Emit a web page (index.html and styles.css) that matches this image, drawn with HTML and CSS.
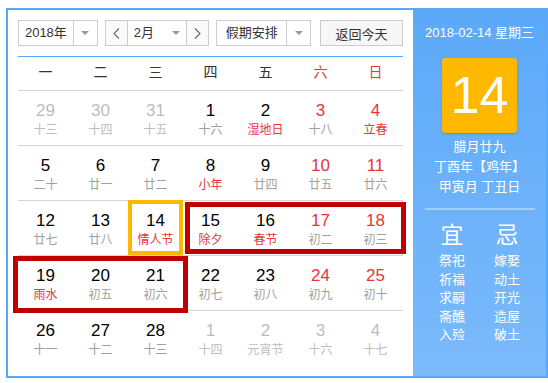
FILE: index.html
```html
<!DOCTYPE html>
<html lang="zh-CN">

<head>
    <meta charset="UTF-8">
    <meta name="viewport" content="width=device-width, initial-scale=1.0">
    <title>万年历</title>
    <link rel="stylesheet" href="styles.css">
</head>

<body>
    <div class="calendar">
        <div class="main">
            <!-- 工具栏 -->
            <div class="toolbar">
                <div class="select year">
                    <span class="label">2018年</span>
                    <span class="arrow"><i class="caret"></i></span>
                </div>
                <div class="select month">
                    <span class="nav"><svg width="7" height="11" viewBox="0 0 7 11"><polyline points="6,0.5 1,5.5 6,10.5" fill="none" stroke="#666" stroke-width="1.1"/></svg></span>
                    <span class="label"><span>2月</span><i class="caret"></i></span>
                    <span class="nav"><svg width="7" height="11" viewBox="0 0 7 11"><polyline points="1,0.5 6,5.5 1,10.5" fill="none" stroke="#666" stroke-width="1.1"/></svg></span>
                </div>
                <div class="select holiday">
                    <span class="label">假期安排</span>
                    <span class="arrow"><i class="caret"></i></span>
                </div>
                <button class="today-btn">返回今天</button>
            </div>

            <!-- 星期 -->
            <div class="weekdays">
                <span>一</span><span>二</span><span>三</span><span>四</span><span>五</span>
                <span class="weekend">六</span><span class="weekend">日</span>
            </div>

            <!-- 日期 -->
            <div class="days">
                <div class="day other"><b>29</b><small>十三</small></div>
                <div class="day other"><b>30</b><small>十四</small></div>
                <div class="day other"><b>31</b><small>十五</small></div>
                <div class="day"><b>1</b><small>十六</small></div>
                <div class="day"><b>2</b><small class="fest">湿地日</small></div>
                <div class="day weekend"><b>3</b><small>十八</small></div>
                <div class="day weekend"><b>4</b><small class="fest">立春</small></div>

                <div class="day"><b>5</b><small>二十</small></div>
                <div class="day"><b>6</b><small>廿一</small></div>
                <div class="day"><b>7</b><small>廿二</small></div>
                <div class="day"><b>8</b><small class="fest">小年</small></div>
                <div class="day"><b>9</b><small>廿四</small></div>
                <div class="day weekend"><b>10</b><small>廿五</small></div>
                <div class="day weekend"><b>11</b><small>廿六</small></div>

                <div class="day"><b>12</b><small>廿七</small></div>
                <div class="day"><b>13</b><small>廿八</small></div>
                <div class="day today"><b>14</b><small class="fest">情人节</small></div>
                <div class="day"><b>15</b><small class="fest">除夕</small></div>
                <div class="day"><b>16</b><small class="fest">春节</small></div>
                <div class="day weekend"><b>17</b><small>初二</small></div>
                <div class="day weekend"><b>18</b><small>初三</small></div>

                <div class="day"><b>19</b><small class="fest">雨水</small></div>
                <div class="day"><b>20</b><small>初五</small></div>
                <div class="day"><b>21</b><small>初六</small></div>
                <div class="day"><b>22</b><small>初七</small></div>
                <div class="day"><b>23</b><small>初八</small></div>
                <div class="day weekend"><b>24</b><small>初九</small></div>
                <div class="day weekend"><b>25</b><small>初十</small></div>

                <div class="day"><b>26</b><small>十一</small></div>
                <div class="day"><b>27</b><small>十二</small></div>
                <div class="day"><b>28</b><small>十三</small></div>
                <div class="day other"><b>1</b><small>十四</small></div>
                <div class="day other"><b>2</b><small>元宵节</small></div>
                <div class="day other"><b>3</b><small>十六</small></div>
                <div class="day other"><b>4</b><small>十七</small></div>
            </div>

            <!-- 标记框 -->
            <div class="mark mark-1"></div>
            <div class="mark mark-2"></div>
        </div>

        <!-- 右侧详情 -->
        <div class="side">
            <p class="date">2018-02-14 星期三</p>
            <div class="big-day">14</div>
            <p class="lunar">腊月廿九<br>丁酉年【鸡年】<br>甲寅月 丁丑日</p>
            <hr>
            <div class="yiji">
                <div>
                    <h3>宜</h3>
                    <p>祭祀<br>祈福<br>求嗣<br>斋醮<br>入殓</p>
                </div>
                <div>
                    <h3>忌</h3>
                    <p>嫁娶<br>动土<br>开光<br>造屋<br>破土</p>
                </div>
            </div>
        </div>
    </div>
</body>

</html>
```

FILE: styles.css
```css
body {
    margin: 0;
    font-family: "Liberation Sans", "Noto Sans CJK SC", sans-serif;
    color: #333;
    background: #fff;
    overflow: hidden;
}

.calendar {
    display: flex;
    width: 538px;
    height: 366px;
    margin: 8px 0 0 6px;
    border: 2px solid #5aa8f8;
}

.main {
    position: relative;
    width: 385px;
    padding: 10px;
}

/* 工具栏 */
.toolbar {
    display: flex;
    height: 26px;
    font-size: 13px;
}

.select {
    display: flex;
    box-sizing: border-box;
    height: 26px;
    border: 1px solid #ccc;
    background: #fff;
    line-height: 24px;
}

.select .label {
    flex: 1;
    text-align: center;
}

.select .arrow {
    display: flex;
    align-items: center;
    justify-content: center;
    width: 23px;
    border-left: 1px solid #ccc;
}

.caret {
    display: inline-block;
    width: 0;
    height: 0;
    border-left: 4px solid transparent;
    border-right: 4px solid transparent;
    border-top: 4px solid #999;
}

.year {
    width: 80px;
}

.month {
    width: 105px;
    margin-left: 7px;
}

.month .nav {
    display: flex;
    align-items: center;
    justify-content: center;
    width: 21px;
    background: #fafafa;
}

.month .nav:first-child {
    border-right: 1px solid #ccc;
}

.month .nav:last-child {
    border-left: 1px solid #ccc;
}

.month .label {
    display: flex;
    align-items: center;
    justify-content: space-between;
    padding: 0 6px 0 6px;
}

.holiday {
    width: 95px;
    margin-left: 7px;
}

.today-btn {
    width: 83px;
    height: 26px;
    margin-left: 9px;
    padding: 0;
    border: 1px solid #ccc;
    background: #f7f7f7;
    color: #333;
    font-family: inherit;
    font-size: 13px;
}

/* 星期 */
.weekdays {
    display: grid;
    grid-template-columns: repeat(7, 55px);
    margin-top: 10px;
    border-top: 1px solid #5aa8f8;
    height: 33px;
    line-height: 31px;
    font-size: 14px;
    text-align: center;
}

.weekdays .weekend {
    color: #e8343c;
}

/* 日期 */
.days {
    display: grid;
    grid-template-columns: repeat(7, 55px);
    grid-auto-rows: 55px;
}

.day {
    position: relative;
    box-sizing: border-box;
    border-top: 1px solid #d4d4d4;
    padding-top: 10px;
    text-align: center;
}

.day b {
    display: block;
    font-weight: normal;
    font-size: 17px;
    line-height: 20px;
    color: #000;
}

.day small {
    display: block;
    font-size: 12px;
    line-height: 18px;
    color: #a0a0a0;
}

.day.weekend b {
    color: #e8343c;
}

.day small.fest {
    color: #e8343c;
}

.day.other b,
.day.other small {
    color: #bdbdbd;
}

.day.today::after {
    content: "";
    position: absolute;
    top: -1px;
    left: 0;
    right: 0;
    bottom: 0;
    border: 4px solid #ffb800;
}

.mark {
    position: absolute;
    border: 5px solid #c00000;
}

.mark-1 {
    left: 177px;
    top: 192px;
    width: 211px;
    height: 42px;
}

.mark-2 {
    left: 5px;
    top: 246px;
    width: 165px;
    height: 47px;
}

/* 右侧 */
.side {
    width: 133px;
    background: linear-gradient(#5ca9f9, #7bbafb);
    color: #fff;
    text-align: center;
    font-size: 13px;
}

.side p {
    margin: 0;
}

.side .date {
    margin-top: 13px;
    line-height: 20px;
}

.big-day {
    width: 75px;
    height: 75px;
    margin: 15px auto 0;
    border-radius: 3px;
    background: #ffb800;
    box-shadow: 0 1px 2px rgba(0, 0, 0, 0.2);
    font-size: 52px;
    line-height: 75px;
}

.side .lunar {
    margin-top: 4px;
    line-height: 20px;
}

.side hr {
    width: 110px;
    height: 2px;
    margin: 11px auto 0;
    border: none;
    background: rgba(255, 255, 255, 0.35);
}

.yiji {
    display: grid;
    grid-template-columns: 55px 55px;
    justify-content: center;
    margin-top: 10px;
}

.yiji h3 {
    margin: 0;
    font-size: 23px;
    font-weight: normal;
    line-height: 30px;
}

.yiji p {
    margin-top: 2px;
    line-height: 18.6px;
}
```
